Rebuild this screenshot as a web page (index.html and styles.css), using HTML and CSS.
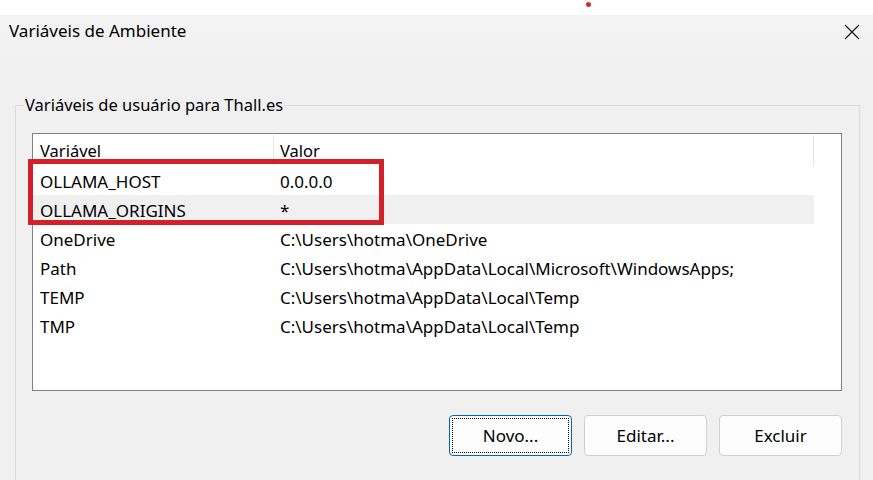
FILE: index.html
```html
<!DOCTYPE html>
<html lang="pt-BR">
<head>
<meta charset="utf-8">
<title>Variáveis de Ambiente</title>
<link rel="stylesheet" href="styles.css">
</head>
<body>
<div class="topstrip"><span class="dot"></span></div>
<div class="dialog">
  <div class="titlebar">
    <span class="title">Variáveis de Ambiente</span>
    <svg class="close" width="16" height="16" viewBox="0 0 16 16"><path d="M1 1 L15 15 M15 1 L1 15" stroke="#1a1a1a" stroke-width="1.3" fill="none"/></svg>
  </div>
  <fieldset class="group">
    <legend>Variáveis de usuário para Thall.es</legend>
    <div class="list">
      <div class="row head">
        <div class="c1">Variável</div>
        <div class="c2">Valor</div>
      </div>
      <div class="row"><div class="c1">OLLAMA_HOST</div><div class="c2">0.0.0.0</div></div>
      <div class="row sel"><div class="c1">OLLAMA_ORIGINS</div><div class="c2">*</div></div>
      <div class="row"><div class="c1">OneDrive</div><div class="c2">C:\Users\hotma\OneDrive</div></div>
      <div class="row"><div class="c1">Path</div><div class="c2">C:\Users\hotma\AppData\Local\Microsoft\WindowsApps;</div></div>
      <div class="row"><div class="c1">TEMP</div><div class="c2">C:\Users\hotma\AppData\Local\Temp</div></div>
      <div class="row"><div class="c1">TMP</div><div class="c2">C:\Users\hotma\AppData\Local\Temp</div></div>
      <div class="mark"></div>
    </div>
    <div class="buttons">
      <button class="btn focus"><span>Novo...</span></button>
      <button class="btn">Editar...</button>
      <button class="btn">Excluir</button>
    </div>
  </fieldset>
</div>
</body>
</html>
```
FILE: styles.css
```css
html, body {
  margin: 0;
  padding: 0;
  background: #f0f0f0;
  font-family: "Noto Sans", "Open Sans", sans-serif;
  font-size: 16px;
  color: #000;
  overflow: hidden;
}
.topstrip {
  height: 15px;
  background: #fff;
  display: flex;
  padding-left: 586px;
  box-sizing: border-box;
}
.dot {
  width: 5px;
  height: 5px;
  border-radius: 50%;
  background: #d42a2a;
  margin-top: 2px;
}
.dialog {
  background: linear-gradient(#f3f3f3, #f0f0f0 90px);
  height: 465px;
}
.titlebar {
  height: 80px;
  box-sizing: border-box;
  padding: 6px 13px 0 9px;
  display: flex;
  justify-content: space-between;
  align-items: flex-start;
}
.title {
  font-size: 17px;
  line-height: 20px;
}
.close {
  margin-top: 3px;
}
.group {
  margin: 0 0 0 15px;
  width: 845px;
  box-sizing: border-box;
  border: 1px solid #dcdcdc;
  padding: 0 17px 0 16px;
  height: 400px;
}
.group legend {
  font-size: 16.5px;
  line-height: 20px;
  padding: 0 1px;
  margin-left: -8px;
}
.list {
  position: relative;
  margin-top: 18px;
  height: 258px;
  box-sizing: border-box;
  border: 1px solid #828282;
  background: #fff;
  padding-right: 27px;
  font-size: 17px;
}
.row {
  display: flex;
  height: 29px;
  align-items: center;
  padding-top: 1px;
  box-sizing: border-box;
}
.row.head {
  height: 32px;
  font-size: 16.5px;
}
.row.head .c1, .row.head .c2 {
  border-right: 1px solid #e5e5e5;
  align-self: stretch;
  display: flex;
  align-items: center;
}
.row.sel {
  background: #f0f0f0;
}
.c1 {
  width: 241px;
  padding-left: 7px;
  box-sizing: border-box;
}
.c2 {
  flex: 1;
  padding-left: 6px;
  box-sizing: border-box;
}
.mark {
  position: absolute;
  left: -5px;
  top: 25px;
  width: 356px;
  height: 66px;
  box-sizing: border-box;
  border: 5px solid #d3202a;
}
.buttons {
  display: flex;
  justify-content: flex-end;
  gap: 12px;
  margin-top: 24px;
}
.btn {
  flex: none;
  width: 123px;
  height: 41px;
  box-sizing: border-box;
  border: 1px solid #d0d0d0;
  border-radius: 4px;
  background: #fdfdfd;
  font-family: inherit;
  font-size: 17px;
  color: #000;
  padding: 0;
}
.btn.focus {
  border-color: #0067c0;
  padding: 2px;
}
.btn.focus span {
  display: flex;
  align-items: center;
  justify-content: center;
  height: 100%;
  border: 1px dotted #000;
  box-sizing: border-box;
}
```
